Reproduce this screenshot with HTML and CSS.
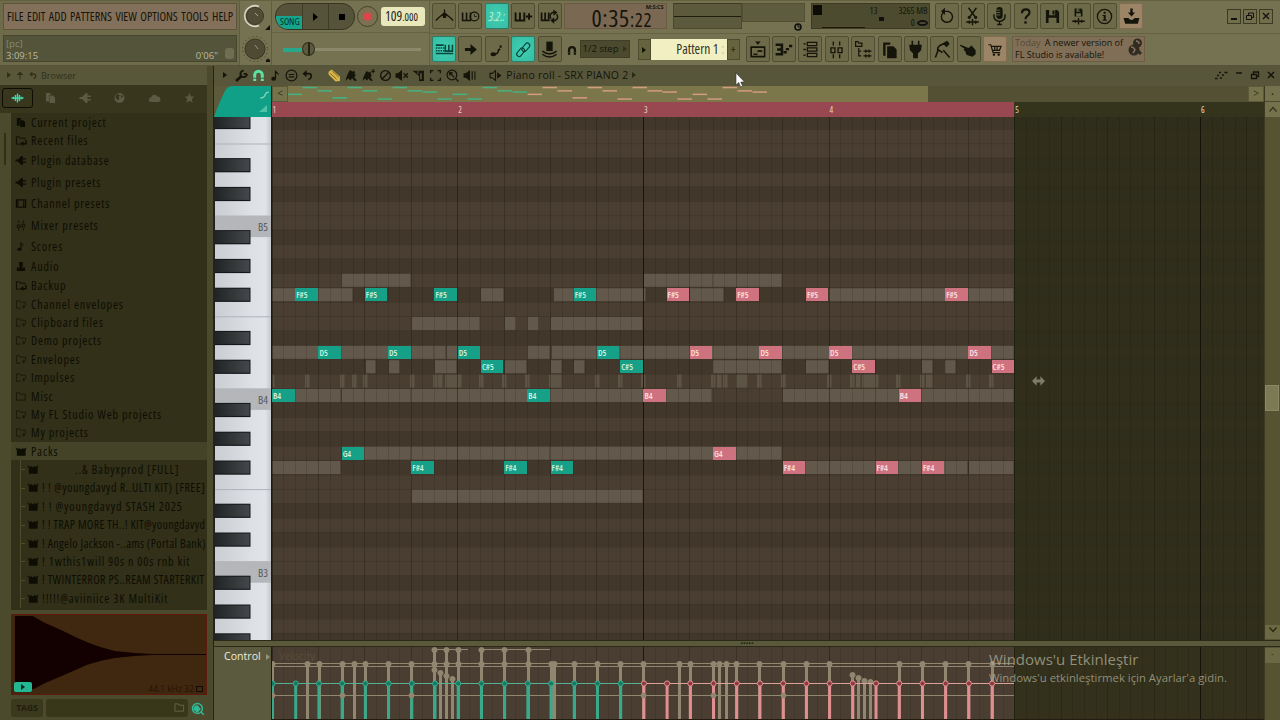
FILE: index.html
```
<!DOCTYPE html>
<html lang="en">
<head>
<meta charset="UTF-8">
<meta name="viewport" content="width=device-width, initial-scale=1.0">
<title>Piano roll - SRX PIANO 2</title>
<link rel="stylesheet" href="styles.css">
</head>
<body>
<!-- icon set -->
<svg class="icon-set">
  <symbol id="i-file" viewBox="0 0 24 24"><path d="M3 2h9v4H9v13H3zM10 7h7l4 4v11H10z" fill="currentColor"/></symbol>
  <symbol id="i-folder" viewBox="0 0 24 24"><path d="M2 20V4h7l2 3h10v13z" fill="none" stroke="currentColor" stroke-width="2"/></symbol>
  <symbol id="i-folder-arrow" viewBox="0 0 24 24"><path d="M11 20H2V4h7l2 3h10v3" fill="none" stroke="currentColor" stroke-width="2"/><path d="M23 11v8h-8" fill="none" stroke="currentColor" stroke-width="3"/><path d="M10 19l7-6v11z" fill="currentColor"/></symbol>
  <symbol id="i-folder-note" viewBox="0 0 24 24"><path d="M12 20H2V4h7l2 3h11v7" fill="none" stroke="currentColor" stroke-width="2"/><path d="M14 14h8l-4 8z" fill="currentColor"/></symbol>
  <symbol id="i-plug" viewBox="0 0 24 24"><path d="M0 10h5l8-8h3v5h7v3h-7v4h7v3h-7v5h-3l-8-8H0z" fill="currentColor"/></symbol>
  <symbol id="i-channel" viewBox="0 0 24 24"><path d="M2 4h20v16H2zM5 4v16M18 4v16" fill="none" stroke="currentColor" stroke-width="2.4"/></symbol>
  <symbol id="i-mixer" viewBox="0 0 24 24"><path d="M7 1v5M7 19v4M17 1v5M17 18v5M4 11h6v6H4zM14 9h6v6h-6z" fill="none" stroke="currentColor" stroke-width="1.8"/></symbol>
  <symbol id="i-note" viewBox="0 0 24 24"><path d="M12 3v14" stroke="currentColor" stroke-width="2.4"/><path d="M12 2c0 4 7 4 6 10-1-3-4-5-6-4z" fill="currentColor"/><ellipse cx="8.500" cy="18" rx="4.500" ry="3.500" fill="currentColor"/></symbol>
  <symbol id="i-audio" viewBox="0 0 24 24"><path d="M8 2h8v8l-2 4h7v8H3v-8h7l-2-4z" fill="currentColor"/></symbol>
  <symbol id="i-pack" viewBox="0 0 24 24"><path d="M0 3l7 4V3l4 4h2l4-4v4l7-4-2 7v11H3V10z" fill="currentColor"/></symbol>
  <symbol id="i-wave" viewBox="0 0 24 24"><path d="M0 12h24M4 9.500v5M8 6v12M12 3v18M16 6v12M20 9.500v5" stroke="currentColor" stroke-width="2.8"/></symbol>
  <symbol id="i-globe" viewBox="0 0 24 24"><circle cx="12" cy="12" r="10" fill="currentColor"/><path d="M6 4l7 2-3 4 2 2-3 5-5-7zM15 5l4 4-4 3z" fill="#35331c"/></symbol>
  <symbol id="i-cloud" viewBox="0 0 24 24"><path d="M5 20a4 4 0 0 1 0-9 7 7 0 0 1 13-2 5.500 5.500 0 0 1 1 11z" fill="currentColor"/></symbol>
  <symbol id="i-star" viewBox="0 0 24 24"><path d="M12 2l3 7h7l-5.500 5 2 8-6.500-4.500L5.500 22l2-8L2 9h7z" fill="currentColor"/></symbol>
  <symbol id="i-undo" viewBox="0 0 24 24"><path d="M6 8h8q7 0 6 7-1 4-6 6" fill="none" stroke="currentColor" stroke-width="4"/><path d="M1 8l9-8v16z" fill="currentColor"/></symbol>
  <symbol id="i-up" viewBox="0 0 24 24"><path d="M12 4v20M3 9h18" stroke="currentColor" stroke-width="3"/><path d="M12 0l8 9H4z" fill="currentColor"/></symbol>
  <symbol id="i-magnet" viewBox="0 0 24 24"><path d="M5 22V11a7 7 0 0 1 14 0v11" fill="none" stroke="currentColor" stroke-width="5.500"/><path d="M1 17h8M15 17h8" stroke="#4b4a32" stroke-width="1.500"/></symbol>
  <symbol id="i-wrench" viewBox="0 0 24 24"><path d="M2 22l10-9" stroke="currentColor" stroke-width="5"/><path d="M22 9a6 6 0 1 1-6-6M22 9h-6" fill="none" stroke="currentColor" stroke-width="3.500"/></symbol>
  <symbol id="i-brush" viewBox="0 0 24 24"><path d="M3 14L9 2l5 3 2-2 3 3-2 2 3 3-3 4 5 6-4 1-5-5-3 4-4-4-5 5z" fill="currentColor"/></symbol>
  <symbol id="i-speaker" viewBox="0 0 24 24"><path d="M1 8h4l8-6v20l-8-6H1z" fill="currentColor"/></symbol>
  <symbol id="i-save" viewBox="0 0 24 24"><path d="M2 2h17l3 3v17H2z" fill="currentColor"/><path d="M7 2h9v8H7zM6 14h12v8H6z" fill="#6a6948"/><path d="M12 3h3v6h-3z" fill="currentColor"/></symbol>
</svg>

<div class="app">
  <header class="toolbar">
    <div class="menu-col">
      <nav class="menu">
        <span>FILE</span><span>EDIT</span><span>ADD</span><span>PATTERNS</span><span>VIEW</span><span>OPTIONS</span><span>TOOLS</span><span>HELP</span>
      </nav>
      <div class="hint">
        <div class="hint-name">[pc]</div>
        <div class="hint-row"><span>3:09:15</span><span class="hint-len">0'06"</span><i class="hint-hand"></i></div>
      </div>
    </div>

    <div class="knob-col">
      <div class="knob-cell">
        <svg width="30" height="32" viewBox="0 0 30 32"><circle cx="15" cy="15" r="8.500" fill="#504d36" stroke="#3a3924"/><path d="M19 5.500A10.300 10.300 0 1 0 19 24.500" fill="none" stroke="#d9d8c8" stroke-width="1.500"/><path d="M15 12l3 3" stroke="#aaa88b"/><path d="M30 24v5h-5z" fill="#111"/></svg>
      </div>
      <div class="knob-cell">
        <svg width="30" height="32" viewBox="0 0 30 32"><circle cx="15" cy="15" r="12.500" fill="none" stroke="#3c3b26" stroke-dasharray="1 3"/><circle cx="15" cy="15" r="10" fill="#4e4b35" stroke="#383722"/><path d="M15 11l3 4" stroke="#98967a"/><path d="M26 28v-3l1 1 1-2 1 2 1-1v3z" fill="#111"/></svg>
      </div>
    </div>

    <div class="transport-col">
      <div class="transport">
        <div class="pill">
          <div class="song"><span>SONG</span></div>
          <div class="pill-btn"><svg width="8" height="10" viewBox="0 0 8 10"><path d="M1 1l5 4-5 4z"/></svg></div>
          <div class="pill-btn"><svg width="8" height="8"><path d="M1 1h6v6H1z"/></svg></div>
        </div>
        <div class="record"></div>
        <div class="tempo">109<small>.000</small></div>
      </div>
      <div class="slider"><i class="slider-fill"></i><i class="slider-thumb"></i></div>
    </div>

    <div class="tools-col">
      <div class="tool-row">
        <div class="btn-group">
          <div class="btn"><svg viewBox="0 0 24 24"><path d="M12 3v5M1 17q7-7 11-9 4 2 11 9" fill="none" stroke="currentColor" stroke-width="1.600"/><path d="M7 12l5-6 5 6-3-1v3h-4v-3z"/></svg></div>
          <div class="btn"><svg viewBox="0 0 24 24"><path d="M2 7v10h10V7M7 7v10" fill="none" stroke="currentColor" stroke-width="2"/><circle cx="17" cy="12" r="5.500" fill="none" stroke="currentColor" stroke-width="1.500"/><path d="M17 9v3h3" fill="none" stroke="currentColor"/></svg></div>
          <div class="btn on"><span class="count-label">3.2.:</span></div>
          <div class="btn"><svg viewBox="0 0 24 24"><path d="M2 7v10h11V7M7.500 7v10M15 12h8M19 8v8" fill="none" stroke="currentColor" stroke-width="2.400"/></svg></div>
          <div class="btn"><svg viewBox="0 0 24 24"><path d="M2 7v10h9V7M6.500 7v10" fill="none" stroke="currentColor" stroke-width="2.200"/><path d="M14 15a5 5 0 0 1 2-8h2M21 9a5 5 0 0 1-2 8h-2" fill="none" stroke="currentColor" stroke-width="1.800"/><path d="M17 3l5 4-5 4zM18 13l-5 4 5 4z"/></svg></div>
        </div>
        <div class="clock"><div class="clock-unit">M:S:CS</div><div class="clock-main">0:35<small>:22</small></div></div>
        <div class="scope"></div>
        <div class="scope-side"><div class="peak"></div><svg width="10" height="9" viewBox="0 0 10 9"><circle cx="5" cy="4" r="3" fill="none" stroke="#111" stroke-width="1.600"/><path d="M5 1v3h3" stroke="#111" fill="none"/></svg></div>
        <div class="cpu"><i class="cpu-mark"></i><div class="cpu-graph"></div><div class="cpu-nums"><span>13</span><i></i></div><div class="cpu-mem"><span>3265 MB</span><span>0 <i class="disk"></i></span></div></div>
        <div class="btn-group right-group">
          <div class="btn"><svg viewBox="0 0 24 24"><path d="M8 7A7 7 0 1 0 14 5.500H8" fill="none" stroke="currentColor" stroke-width="1.800"/><path d="M10 1v9L5 5.500z"/></svg></div>
          <div class="btn"><svg viewBox="0 0 24 24"><path d="M7 1l8 11M17 1L9 12M4 19h16M8 17v4M12 15v8M16 17v4" stroke="currentColor" stroke-width="1.800"/><circle cx="8" cy="13" r="2"/><circle cx="16" cy="13" r="2"/></svg></div>
          <div class="btn"><svg viewBox="0 0 24 24"><rect x="8" y="0" width="8" height="15" rx="4"/><path d="M5 9v3a7 6 0 0 0 14 0V9M12 18v4M9 22h6" fill="none" stroke="currentColor" stroke-width="1.800"/><path d="M8 4h5M8 7h5M8 10h5" stroke="#77754f"/></svg></div>
          <div class="btn"><svg viewBox="0 0 24 24"><path d="M7.500 8q0-5 5-5 5 0 4.500 4.500-.5 2.500-3 4-2 1.500-2 4" fill="none" stroke="currentColor" stroke-width="2.700"/><path d="M10.500 18h3v3h-3z"/></svg></div>
          <div class="btn"><svg viewBox="0 0 24 24"><use href="#i-save" x="2" y="2" width="20" height="20"/></svg></div>
          <div class="btn"><svg viewBox="0 0 24 24"><use href="#i-save" x="6" y="1" width="12" height="12"/><path d="M4 18h16M8 16v4M12 14v8M16 16v4" stroke="currentColor" stroke-width="1.800"/></svg></div>
          <div class="btn"><svg viewBox="0 0 24 24"><circle cx="12" cy="12" r="9" fill="none" stroke="currentColor" stroke-width="1.600"/><path d="M11 6h2.500v2.500H11zM9.500 10h4v6H15v1.500H9.500V16H11v-4.500H9.500z"/></svg></div>
          <div class="btn alert"><svg viewBox="0 0 24 24"><path d="M10.500 2h3v5h3l-4.500 5-4.500-5h3zM2 14h6q4 5 8 0h6l-2 7H4z"/></svg></div>
        </div>
        <div class="win-btns">
          <i><svg width="12" height="12"><path d="M3 9h6" stroke="#111" stroke-width="2"/></svg></i>
          <i><svg width="12" height="12"><path d="M2.500 5.500h5v4h-5zM4.500 5V3h5v4.500H8" fill="none" stroke="#111"/></svg></i>
          <i><svg width="12" height="12"><path d="M3 3l6 6M9 3l-6 6" stroke="#111" stroke-width="1.300"/></svg></i>
        </div>
      </div>

      <div class="tool-row second">
        <div class="btn-group">
          <div class="btn on"><svg viewBox="0 0 24 24"><path d="M1 6.500h10M1 17h22M13 6v8h9V6M17.500 6v9" fill="none" stroke="currentColor" stroke-width="2"/><path d="M1 10h11M1 13.500h11" stroke="currentColor" stroke-width="2" stroke-dasharray="2 1"/></svg></div>
          <div class="btn"><svg viewBox="0 0 24 24"><path d="M5 10h7V5l8 7-8 7v-5H5z"/></svg></div>
          <div class="btn"><svg viewBox="0 0 24 24"><ellipse cx="8" cy="18" rx="3.500" ry="2.500"/><path d="M10 18q5-1 4-5" fill="none" stroke="currentColor" stroke-width="2"/><path d="M14 13q4-2 3-7" fill="none" stroke="currentColor" stroke-width="2.500" stroke-dasharray="3 1.500"/></svg></div>
          <div class="btn on"><svg viewBox="0 0 24 24"><g transform="rotate(-50 12 12)" fill="none" stroke="currentColor" stroke-width="1.500"><rect x="1" y="8.500" width="12" height="6" rx="3"/><rect x="10" y="9.500" width="12" height="6" rx="3"/></g></svg></div>
          <div class="btn"><svg viewBox="0 0 24 24"><path d="M8 2h8v12H8z"/><path d="M3 14q9 7 18 0M3 18q9 7 18 0" fill="none" stroke="currentColor" stroke-width="2"/></svg></div>
        </div>
        <svg class="snap-magnet"><use href="#i-magnet"/></svg>
        <div class="snap">1/2 step<b></b></div>
        <div class="pat-arrow"><b></b></div>
        <div class="pattern">Pattern 1<em>:</em></div>
        <div class="pat-add">+</div>
        <div class="btn-group pat-group">
          <div class="btn"><svg viewBox="0 0 24 24"><path d="M4 9h17v12H4z" fill="none" stroke="currentColor" stroke-width="2"/><path d="M9 2h7l-3.500 4zM7 17h5v2H7zM12 13h6v2h-6z"/></svg></div>
          <div class="btn"><svg viewBox="0 0 24 24"><path d="M2 6h8v12H2M4 12h6" fill="none" stroke="currentColor" stroke-width="3.200"/><path d="M12 14h4v3h-4zM15 10h4v3h-4zM19 6h4v3h-4z"/></svg></div>
          <div class="btn"><svg viewBox="0 0 24 24"><path d="M8 3h12v4H8zM8 10h12v4H8zM8 17h12v4H8zM3 5h3M3 12h3M3 19h3" fill="none" stroke="currentColor" stroke-width="1.600"/></svg></div>
          <div class="btn"><svg viewBox="0 0 24 24"><path d="M8 2v5M8 18v5M16 2v5M16 18v5M5 10h5v6H5zM14 10h5v6h-5z" fill="none" stroke="currentColor" stroke-width="1.700"/></svg></div>
          <div class="btn"><svg viewBox="0 0 24 24"><path d="M2 8V2h3l1 2h4v4zM6 10v10h3M6 14h3M12 14h10M12 20h10M15 12v4M19 12v4M15 18v4M19 18v4" fill="none" stroke="currentColor" stroke-width="1.500"/></svg></div>
          <div class="btn"><svg viewBox="0 0 24 24"><path d="M4 3h9v3H7v14H4zM9 8h8l4 4v11H9z"/></svg></div>
          <div class="btn"><svg viewBox="0 0 24 24"><path d="M7 1h2v5h6V1h2v5h3l-1 7-4 4v6h-6v-6l-4-4-1-7h3z"/></svg></div>
          <div class="btn"><svg viewBox="0 0 24 24"><path d="M15 5Q9 5 6 10v4l-3 8M6 12l6 4M13 13l8 9" fill="none" stroke="currentColor" stroke-width="2"/><path d="M12 4l6-3 3 4-4 4z"/></svg></div>
          <div class="btn"><svg viewBox="0 0 24 24"><path d="M2 6l10 4 4-3 5 6v5l-4 3-7-2-2-3 1-1-3-2 1-2-6-4z"/></svg></div>
          <div class="btn alert"><svg viewBox="0 0 24 24"><path d="M3 6h3l3 10h9M7 8h12l-2 5H8M11 8v5M14 8v5" fill="none" stroke="currentColor" stroke-width="1.500"/><circle cx="10" cy="18.500" r="1.500"/><circle cx="16" cy="18.500" r="1.500"/></svg></div>
        </div>
        <div class="news"><p><span>Today</span> A newer version of<br>FL Studio is available!</p><svg width="15" height="20" viewBox="0 0 15 20"><circle cx="9.500" cy="5" r="4.500" fill="#302d20"/><circle cx="6" cy="12" r="5.500" fill="#302d20"/><path d="M3 9q3 0 4 3l-2 3M8 3q3 0 3 3" stroke="#857060" stroke-width="1.500" fill="none"/><path d="M10 13l3 3" stroke="#302d20" stroke-width="3"/></svg></div>
      </div>
    </div>
  </header>

  <main class="workspace">
    <aside class="browser">
      <div class="browser-head"><b></b><svg><use href="#i-up"/></svg><svg><use href="#i-undo"/></svg><span>Browser</span></div>
      <div class="browser-tabs">
        <span class="tab active"><svg><use href="#i-wave"/></svg></span>
        <span class="tab"><svg><use href="#i-file"/></svg></span>
        <span class="tab"><svg><use href="#i-plug"/></svg></span>
        <span class="tab"><svg><use href="#i-globe"/></svg></span>
        <span class="tab"><svg><use href="#i-cloud"/></svg></span>
        <span class="tab"><svg><use href="#i-star"/></svg></span>
      </div>
      <div class="browser-body">
        <div class="browser-scroll"><i></i></div>
        <ul class="tree">
          <li><svg><use href="#i-file"/></svg>Current project</li>
          <li><svg><use href="#i-folder-arrow"/></svg>Recent files</li>
          <li class="tall"><svg><use href="#i-plug"/></svg>Plugin database</li>
          <li class="tall"><svg><use href="#i-plug"/></svg>Plugin presets</li>
          <li class="tall"><svg><use href="#i-channel"/></svg>Channel presets</li>
          <li class="tall"><svg><use href="#i-mixer"/></svg>Mixer presets</li>
          <li class="tall"><svg><use href="#i-note"/></svg>Scores</li>
          <li class="mid"><svg><use href="#i-audio"/></svg>Audio</li>
          <li><svg><use href="#i-folder-arrow"/></svg>Backup</li>
          <li><svg class="dim"><use href="#i-folder-note"/></svg>Channel envelopes</li>
          <li><svg class="dim"><use href="#i-folder-note"/></svg>Clipboard files</li>
          <li><svg class="dim"><use href="#i-folder-note"/></svg>Demo projects</li>
          <li><svg class="dim"><use href="#i-folder-note"/></svg>Envelopes</li>
          <li><svg class="dim"><use href="#i-folder-note"/></svg>Impulses</li>
          <li><svg class="dim"><use href="#i-folder"/></svg>Misc</li>
          <li><svg class="dim"><use href="#i-folder-note"/></svg>My FL Studio Web projects</li>
          <li><svg class="dim"><use href="#i-folder-note"/></svg>My projects</li>
          <li class="open"><svg><use href="#i-pack"/></svg>Packs</li>
          <li class="sub"><svg><use href="#i-pack"/></svg><span class="pushed">..&amp; Babyxprod [FULL]</span></li>
          <li class="sub"><svg><use href="#i-pack"/></svg><span class="snug">! ! @youngdavyd R..ULTI KIT) [FREE]</span></li>
          <li class="sub"><svg><use href="#i-pack"/></svg><span>! ! @youngdavyd STASH 2025</span></li>
          <li class="sub"><svg><use href="#i-pack"/></svg><span class="tight">! ! TRAP MORE TH..! KIT@youngdavyd</span></li>
          <li class="sub"><svg><use href="#i-pack"/></svg><span class="tight">! Angelo Jackson -..ams (Portal Bank)</span></li>
          <li class="sub"><svg><use href="#i-pack"/></svg><span>! 1wthis1will 90s n 00s rnb kit</span></li>
          <li class="sub"><svg><use href="#i-pack"/></svg><span class="tight">! TWINTERROR PS..REAM STARTERKIT</span></li>
          <li class="sub"><svg><use href="#i-pack"/></svg><span>!!!!!@aviiniice 3K MultiKit</span></li>
        </ul>
      </div>
      <div class="preview">
        <svg class="preview-wave" viewBox="0 0 196 81" preserveAspectRatio="none"><path d="M3 1h18l12 7 16 7 14 7 13 6 14 5 14 4 20 2 18 1h54v1h-54l-18 1-20 2-14 3-14 4-13 6-14 6-16 7-11 6H3z" fill="#130000"/></svg>
        <span class="preview-play"><b></b></span>
        <span class="preview-info">44.1 kHz 32 <i></i></span>
      </div>
      <div class="tags"><span class="tags-btn">TAGS</span><span class="tags-input"><svg><use href="#i-folder"/></svg></span><svg class="tags-find" viewBox="0 0 24 24"><circle cx="11" cy="11" r="8.500" fill="none" stroke="currentColor" stroke-width="2.500"/><path d="M5 12q2-6 6-5l4 5-4 5zM17 17l5 5" stroke="currentColor" stroke-width="2.500" fill="currentColor"/></svg></div>
    </aside>

    <section class="roll">
      <div class="roll-head">
        <b class="tri"></b>
        <svg><use href="#i-wrench"/></svg>
        <svg class="mint"><use href="#i-magnet"/></svg>
        <svg><use href="#i-note"/></svg>
        <svg viewBox="0 0 24 24"><circle cx="12" cy="12" r="10" fill="none" stroke="currentColor" stroke-width="2.200"/><path d="M7 10h10M7 14.500h10" stroke="currentColor" stroke-width="2"/></svg>
        <svg class="small"><use href="#i-undo"/></svg>
        <svg class="pencil" viewBox="0 0 24 24"><path d="M1 5l6-4 15 13v8l-8 1L1 10z" fill="#d8b545"/><path d="M4 8l12 11M8 4l12 11" stroke="#6b5a22" stroke-width="1.500"/></svg>
        <svg><use href="#i-brush"/></svg>
        <svg viewBox="0 0 24 24"><use href="#i-brush" y="2" width="22" height="22"/><path d="M17 4h7M20.500 0v8" stroke="currentColor" stroke-width="2"/></svg>
        <svg viewBox="0 0 24 24"><circle cx="12" cy="12" r="9" fill="none" stroke="currentColor" stroke-width="2.500"/><path d="M18 6L6 18" stroke="currentColor" stroke-width="2.500"/></svg>
        <svg viewBox="0 0 24 24"><use href="#i-speaker"/><path d="M16 8l8 8M24 8l-8 8" stroke="currentColor" stroke-width="2.500"/></svg>
        <svg viewBox="0 0 24 24"><path d="M1 3h21v19h-9V13z" fill="currentColor"/><path d="M15 8h3v11h-3zM10 3h2v6h-2z" fill="#5a5739"/></svg>
        <svg viewBox="0 0 24 24"><path d="M3 8V3h5M16 3h5v5M21 16v5h-5M8 21H3v-5" fill="none" stroke="currentColor" stroke-width="2.500"/></svg>
        <svg viewBox="0 0 24 24"><circle cx="11" cy="11" r="9" fill="none" stroke="currentColor" stroke-width="2.200"/><path d="M7 7l8 8M7 12V7h5M18 18l5 5" stroke="currentColor" stroke-width="2.500" fill="none"/></svg>
        <svg viewBox="0 0 24 24"><use href="#i-speaker"/><path d="M17 4v16M22 4v16" stroke="currentColor" stroke-width="2"/></svg>
        <svg class="title-icon" viewBox="0 0 24 24"><path d="M2 8h4l6-5v18l-6-5H2z" fill="none" stroke="currentColor" stroke-width="2"/><path d="M15 6l8 6-8 6z" fill="currentColor"/></svg>
        <span class="roll-title">Piano roll - SRX PIANO 2</span><b class="tri dimmed"></b>
        <div class="roll-win">
          <svg width="14" height="10" viewBox="0 0 14 10"><path d="M1 8.500h2.500M3 5.500h2M5 2.500h2M6 8h2M8 5h2M10.500 2.500h3" stroke="#14140a" stroke-width="1.500"/></svg>
          <svg width="10" height="10"><path d="M2 3h6" stroke="#14140a" stroke-width="1.500"/></svg>
          <svg width="10" height="10"><path d="M1.500 4.500h5v4h-5zM3.500 4V2h5v4.500H7" fill="none" stroke="#14140a" stroke-width="1.300"/></svg>
          <svg width="10" height="10"><path d="M2 2l6 6M8 2L2 8" stroke="#14140a" stroke-width="1.500"/></svg>
        </div>
      </div>

      <div class="roll-top">
        <svg class="corner" viewBox="0 0 57 31"><path d="M0 31Q3 22 9 9 12 1 17 0h40v31z" fill="#10a088"/><path d="M46 12q4 0 5-3 1-3 4-3" fill="none" stroke="#8fd8bd" stroke-width="1.200"/><path d="M53 19v7h-8z" fill="#4fc3a5"/></svg>
        <div class="rulers">
          <div class="minimap">
            <span class="mini-btn left">&lt;</span>
            <svg class="mini-notes" id="mini-notes" width="640" height="16"></svg>
            <span class="mini-btn right">&gt;</span>
          </div>
          <div class="ruler" id="ruler"></div>
        </div>
        <div class="side-top"><span>•</span><span><svg width="10" height="8"><path d="M1.500 6.500l3.500-4 3.500 4" fill="none" stroke="#33321c" stroke-width="1.200"/></svg></span></div>
      </div>

      <div class="roll-main">
        <svg class="keys" id="keys" width="57" height="523"></svg>
        <div class="grid" id="grid">
          <svg class="grid-svg" id="grid-svg" width="992" height="523"></svg>
          <svg class="resize-cursor" viewBox="0 0 14 10"><path d="M5 0L0 5l5 5V6.500h4V10l5-5-5-5v3.500H5z"/></svg>
        </div>
        <div class="side-scroll"><i class="thumb"></i><span><svg width="10" height="8"><path d="M1.500 1.500l3.500 4 3.500-4" fill="none" stroke="#26250f" stroke-width="1.300"/></svg></span></div>
      </div>

      <div class="splitter">•••••</div>

      <div class="control">
        <div class="control-label">Control<b></b></div>
        <div class="velocity"><span class="velocity-name">Velocity</span><svg id="velocity" width="992" height="73"></svg></div>
        <div class="side-scroll"><span class="minus">-</span></div>
      </div>
    </section>
  </main>

  <!-- overlays -->
  <div class="activate"><div class="activate-title">Windows'u Etkinleştir</div><div class="activate-text">Windows'u etkinleştirmek için Ayarlar'a gidin.</div></div>
  <svg class="pointer" viewBox="0 0 10 16"><path d="M1 1v12l2.800-2.600L5.600 15l2-.9L5.800 10H9.600z" fill="#fff" stroke="#333" stroke-width=".6"/></svg>
</div>
<script src="script.js"></script>
</body>
</html>
```
FILE: styles.css
```
* {
    box-sizing: border-box;
}
body {
    margin: 0;
    overflow: hidden;
    background: #4b4a2c;
    font-family: "Open Sans", "Noto Sans", sans-serif;
    color: #15150a;
}
i, em {
    font-style: normal;
}
.icon-set {
    display: none;
}
.app {
    position: relative;
    width: 1280px;
    height: 720px;
    display: flex;
    flex-direction: column;
    overflow: hidden;
}

/* toolbar */
.toolbar {
    display: flex;
    height: 66px;
    background: #757251;
    border-bottom: 1px solid #55533a;
    border-top: 1px solid #636140;
}
.menu-col {
    width: 240px;
    padding: 2px 2px 0 3px;
    border-right: 1px solid #5f5d3f;
    background: #6d6b4a;
}
.menu {
    display: flex;
    align-items: center;
    justify-content: space-between;
    height: 27px;
    padding: 0 3px 1px 3px;
    background: #83705b;
    border: 1px solid #5f533c;
    font-size: 12.1px;
    font-stretch: 75%;
    white-space: nowrap;
}
.hint {
    height: 27px;
    margin-top: 5px;
    padding: 2px 2px;
    background: #54543a;
    border: 1px solid #46462e;
    font-size: 9.5px;
    line-height: 12px;
    color: #b9b99f;
}
.hint-name {
    color: #8a8a6e;
}
.hint-row {
    display: flex;
}
.hint-len {
    margin-left: auto;
}
.hint-hand {
    width: 9px;
    height: 11px;
    margin: -2px 0 0 7px;
    border-radius: 3px;
    background: #6f6e52;
}
.knob-col {
    width: 32px;
    border-right: 1px solid #5f5d3f;
}
.knob-cell {
    height: 33px;
}
.transport-col {
    width: 158px;
    border-right: 1px solid #64623f;
}
.transport {
    display: flex;
    height: 32px;
    padding: 2px 0 0 3px;
    border-bottom: 1px solid #64623f;
}
.pill {
    display: flex;
    width: 80px;
    height: 27px;
    overflow: hidden;
    border: 1px solid #36361f;
    border-radius: 13px;
    background: #55533a;
}
.song {
    display: flex;
    align-items: flex-end;
    width: 26px;
}
.song span {
    width: 26px;
    height: 13px;
    padding-left: 4px;
    background: #15a58e;
    font-size: 9.5px;
    line-height: 12px;
    font-stretch: 80%;
    color: #052a22;
}
.pill-btn {
    display: flex;
    align-items: center;
    justify-content: center;
    width: 26px;
    border-left: 1px solid #3d3c26;
}
.record {
    width: 21px;
    height: 21px;
    margin: 3px 0 0 2px;
    border: 1.5px solid #434429;
    border-radius: 50%;
    background: radial-gradient(circle, #dc4549 0 3.5px, #7c7052 5px);
}
.tempo {
    width: 44px;
    height: 19px;
    margin: 4px 0 0 3px;
    padding-left: 4px;
    border-radius: 3px;
    background: #e9e8bd;
    font-size: 13.5px;
    line-height: 19px;
    font-stretch: 75%;
    color: #24231a;
}
.tempo small {
    font-size: 10.5px;
}
.slider {
    position: relative;
    width: 138px;
    height: 3px;
    margin: 15px 0 0 11px;
    background: #8b896b;
}
.slider-fill {
    display: block;
    width: 18px;
    height: 4px;
    background: #27a78c;
}
.slider-thumb {
    position: absolute;
    left: 19px;
    top: -6px;
    width: 13px;
    height: 14px;
    border: 1px solid #2c2c18;
    border-radius: 50%;
    background: linear-gradient(90deg, #5b5a40 45%, #24240f 45% 60%, #5b5a40 60%);
}
.tools-col {
    flex: 1;
}
.tool-row {
    display: flex;
    height: 33px;
    padding: 2px 0 0 2px;
    border-bottom: 1px solid #64623f;
}
.btn-group {
    display: flex;
    gap: 2.4px;
}
.btn {
    display: flex;
    align-items: center;
    justify-content: center;
    width: 24px;
    height: 26px;
    background: #6c6a49;
    border: 1.5px solid #4f4e32;
    border-radius: 2px;
    color: #14140a;
}
.btn svg {
    width: 19px;
    height: 19px;
    fill: currentColor;
}
.btn.on {
    background: radial-gradient(#42d0b6, #35bda2);
    border-color: #2d7d66;
    color: #08483c;
}
.btn.alert {
    background: #9c8467;
    border-color: #826c52;
}
.count-label {
    font-size: 12px;
    font-style: italic;
    font-stretch: 75%;
    color: #c5efd0;
}
.clock {
    width: 103px;
    height: 26px;
    margin-left: 2px;
    background: #7a6853;
    border: 1px solid #6a5944;
}
.clock-unit {
    height: 6px;
    padding-right: 2px;
    font-size: 5.5px;
    font-weight: bold;
    line-height: 6px;
    text-align: right;
}
.clock-main {
    height: 18px;
    margin-top: -1px;
    padding-left: 27px;
    font-size: 24px;
    line-height: 17px;
    letter-spacing: .6px;
    font-stretch: 75%;
}
.clock-main small {
    font-size: 19px;
}
.scope {
    width: 69px;
    height: 26px;
    margin-left: 6px;
    background: linear-gradient(#1d1d10, #1d1d10) 0 12px / 100% 1px no-repeat #5b5a3c;
    border: 1px solid #4a492e;
    border-top-color: #3b3a22;
}
.scope-side {
    width: 63px;
    padding-right: 2px;
    text-align: right;
    line-height: 8px;
}
.peak {
    height: 19px;
    margin-right: -2px;
    background: #5d5c3e;
    border: 1px solid #514f34;
}
.cpu {
    display: flex;
    width: 119px;
    height: 26px;
    margin-left: 6px;
    padding: 1px;
    background: #4c4b2f;
    border: 1px solid #3c3b22;
    font-size: 9.5px;
    line-height: 12px;
    font-stretch: 75%;
}
.cpu-mark {
    width: 9px;
    height: 10px;
    background: #0d0d05;
}
.cpu-graph {
    width: 43px;
    height: 19px;
    margin-top: 4px;
    border-bottom: 1px solid #1a1a0c;
}
.cpu-nums {
    width: 18px;
    text-align: center;
}
.cpu-nums i {
    display: block;
    width: 5px;
    height: 4px;
    margin-left: 14px;
    background: #111;
}
.cpu-mem {
    display: flex;
    flex: 1;
    flex-direction: column;
    align-items: flex-end;
    white-space: nowrap;
}
.disk {
    display: inline-block;
    width: 11px;
    height: 6px;
    border: 2px solid #111;
    border-radius: 50%;
}
.right-group {
    margin-left: 5px;
}
.win-btns {
    display: flex;
    gap: 2px;
    margin: 6px 0 0 84px;
}
.win-btns i {
    width: 14px;
    height: 15px;
    border: 1px solid #3b3a24;
    line-height: 0;
    background: #706e4b;
}
.second {
    border-bottom: 0;
}
.snap-magnet {
    width: 10px;
    height: 11px;
    margin: 9px 2px 0 5px;
}
.snap {
    width: 50px;
    height: 18px;
    margin: 4px 0 0 1px;
    padding-left: 2px;
    background: #4b4a2e;
    border: 1px solid #3f3e26;
    font-size: 9.5px;
    line-height: 16px;
    white-space: nowrap;
}
.snap b, .pat-arrow b, .browser-head b, .tri, .control-label b, .preview-play b {
    display: inline-block;
    border: 3px solid transparent;
    border-left: 4px solid currentColor;
    border-right: 0;
}
.snap b {
    margin-left: 5px;
    color: #33321c;
}
.pat-arrow, .pat-add {
    width: 13px;
    height: 21px;
    margin-top: 3px;
    border: 1px solid #4c4b2e;
    background: #66643f;
    font-size: 10px;
    line-height: 18px;
    text-align: center;
}
.pat-arrow {
    margin-left: 8px;
}
.pattern {
    width: 76px;
    height: 21px;
    margin-top: 3px;
    padding-right: 2px;
    background: #f2f0c3;
    font-size: 13.5px;
    line-height: 20px;
    font-stretch: 75%;
    text-align: right;
    color: #33321e;
}
.pattern em {
    margin-left: 3px;
    color: #c5c39a;
}
.pat-group {
    margin-left: 6px;
}
.news {
    display: flex;
    justify-content: space-between;
    width: 133px;
    height: 26px;
    margin-left: 5px;
    padding: 0 1px 0 2px;
    background: #806e57;
    border: 1px solid #6d5c46;
    font-size: 9px;
    line-height: 12px;
    white-space: nowrap;
}
.news p {
    margin: 0;
}
.news span {
    margin-right: 2px;
    color: #544a36;
}
.news svg {
    margin-top: 1px;
    flex: none;
}

/* browser */
.workspace {
    display: flex;
    flex: 1;
    min-height: 0;
}
.browser {
    display: flex;
    flex-direction: column;
    width: 214px;
    padding-right: 6px;
    background: #4b4a2c;
    border-right: 1px solid #26250f;
}
.browser-head {
    display: flex;
    align-items: center;
    gap: 5px;
    height: 19px;
    padding: 0 0 1px 7px;
    background: #59573a;
    font-size: 9px;
    color: #302f1a;
}
.browser-head svg {
    width: 8px;
    height: 9px;
}
.browser-head span {
    margin-left: -1px;
}
.browser-tabs {
    display: flex;
    align-items: center;
    height: 28px;
    padding: 0 0 2px 2px;
    background: #38361d;
    color: #5b5a43;
}
.tab {
    display: flex;
    align-items: center;
    justify-content: center;
    width: 34.9px;
    height: 20px;
}
.tab svg {
    width: 13px;
    height: 12px;
}
.tab.active {
    width: 31px;
    border: 1px solid #0d0d05;
    border-radius: 3px;
    color: #3fd8a8;
}
.browser-body {
    display: flex;
    height: 497px;
}
.browser-scroll {
    width: 11px;
    padding: 20px 0 0 4px;
}
.browser-scroll i {
    display: block;
    width: 2px;
    height: 32px;
    background: #302f18;
}
.tree {
    flex: 1;
    margin: 0;
    padding: 0;
    overflow: hidden;
    list-style: none;
    background: #323018;
    font-size: 12px;
    font-stretch: 75%;
    letter-spacing: .86px;
    color: #0d0d04;
    white-space: nowrap;
}
.tree li {
    display: flex;
    align-items: center;
    height: 18.4px;
    padding: .4px 0 0 4px;
}
.tree li.tall {
    height: 21.5px;
}
.tree li.mid {
    height: 19px;
}
.tree svg {
    width: 12px;
    height: 11px;
    margin-right: 4px;
    flex: none;
}
.tree .dim {
    color: #191808;
}
.tree li.open {
    background: #444327;
}
.tree li.sub {
    padding-left: 15px;
}
.tree li.sub svg {
    margin-right: 3px;
}
.tree li.sub::before {
    content: "";
    width: 4px;
    height: 18.4px;
    margin-left: -6px;
    margin-right: 2px;
    border-left: 1px solid #4c4b2e;
    background: linear-gradient(#4c4b2e, #4c4b2e) 0 9px / 4px 1px no-repeat;
}
.pushed {
    margin-left: 33px;
}
.tree .tight {
    letter-spacing: .35px;
}
.tree .snug {
    letter-spacing: .5px;
}
.preview {
    position: relative;
    width: 196px;
    height: 81px;
    margin: 4px 0 0 11px;
    background: #40270f;
    border: 1px solid #5e1a0c;
}
.preview-wave {
    display: block;
    width: 194px;
    height: 79px;
}
.preview-play {
    position: absolute;
    left: 2px;
    bottom: 2px;
    display: flex;
    align-items: center;
    justify-content: center;
    width: 18px;
    height: 10px;
    border-radius: 2px;
    background: #23b793;
    color: #06281e;
}
.preview-info {
    position: absolute;
    right: 3px;
    bottom: -1px;
    font-size: 8.5px;
    line-height: 12px;
    color: #241305;
}
.preview-info i {
    display: inline-block;
    width: 7px;
    height: 6px;
    border: 1px solid #140a02;
}
.tags {
    display: flex;
    gap: 3px;
    height: 18px;
    margin: 4px 0 0 11px;
}
.tags-btn {
    width: 32px;
    background: #3a391e;
    border-radius: 3px;
    font-size: 8.5px;
    font-weight: bold;
    line-height: 18px;
    text-align: center;
    color: #1f1e0c;
}
.tags-input {
    width: 142px;
    padding: 3px 3px 0 0;
    background: #383719;
    border-radius: 3px;
    text-align: right;
    line-height: 0;
    color: #68664a;
}
.tags-input svg {
    width: 11px;
    height: 11px;
}
.tags-find {
    width: 14px;
    height: 14px;
    margin-top: 3px;
    color: #2fb997;
}

/* piano roll */
.roll {
    width: 1066px;
    display: flex;
    flex-direction: column;
    background: #5c5a3b;
}
.roll-head {
    display: flex;
    align-items: center;
    height: 20px;
    padding: 0 0 2px 9px;
    background: #57553a;
}
.roll-head > svg {
    width: 13px;
    height: 13px;
    margin-right: 3.8px;
}
.roll-head .tri {
    margin-right: 8px;
}
.roll-head .mint {
    color: #5be3a4;
}
.roll-head .small {
    width: 11px;
    margin-right: 15px;
}
.roll-head .title-icon {
    margin: 0 4px 0 10px;
}
.roll-head .dimmed {
    margin-left: 4px;
    color: #2c2b17;
}
.roll-title {
    font-size: 10.5px;
    letter-spacing: .22px;
}
.roll-win {
    display: flex;
    align-items: center;
    gap: 6px;
    margin-left: auto;
    padding-right: 4px;
}
.roll-top {
    display: flex;
    height: 31px;
}
.corner {
    width: 57px;
    height: 31px;
}
.rulers {
    width: 993px;
    border-left: 1px solid #1d1c0e;
}
.minimap {
    display: flex;
    height: 16px;
    background: #535033;
}
.mini-notes {
    background: #7b774a;
}
.mini-btn {
    width: 16px;
    height: 16px;
    border: 1px solid #5b593a;
    font-size: 10px;
    line-height: 12px;
    text-align: center;
    color: #33321c;
    background: #76734b;
}
.mini-btn.right {
    margin-left: auto;
}
.ruler {
    position: relative;
    height: 15px;
    background: linear-gradient(90deg, #994750 742px, #34331b 742px);
    font-size: 8.5px;
    font-stretch: 80%;
    line-height: 15px;
    color: #e4dbc0;
}
.ruler span {
    position: absolute;
    top: 0;
}
.side-top {
    width: 16px;
    background: #74724c;
    font-size: 8px;
    line-height: 15px;
    text-align: center;
    border-left: 1px solid #3b3a22;
}
.side-top span {
    display: block;
    height: 16px;
    color: #33321c;
    border-bottom: 1px solid #4a4930;
}
.roll-main {
    display: flex;
    height: 523px;
}
.keys {
    background: linear-gradient(90deg, #c9ccd0, #dde0e5 65%, #e0e3e8 90%, #c6c9ce);
}
.keys text {
    font-stretch: 80%;
}
.grid {
    position: relative;
    width: 993px;
    border-left: 1px solid #1d1c0e;
}
.grid-svg {
    display: block;
}
.note {
    position: absolute;
    width: 22.5px;
    height: 13px;
    padding-left: 1px;
    background: #16a088;
    font-size: 8.5px;
    font-weight: 600;
    font-stretch: 78%;
    line-height: 13px;
    color: #d6f2dc;
}
.note.pink {
    background: #cf7280;
    color: #fae3df;
}
.resize-cursor {
    position: absolute;
    left: 760px;
    top: 259px;
    width: 13px;
    height: 10px;
    fill: #7f7d66;
}
.side-scroll {
    position: relative;
    width: 16px;
    background: #555332;
    border-left: 1px solid #3b3a22;
    text-align: center;
    font-size: 9px;
    color: #33321c;
}
.side-scroll .thumb {
    display: block;
    width: 14px;
    height: 26px;
    margin-top: 268px;
    background: #7c7a55;
    border: 1px solid #8b8965;
}
.side-scroll span {
    display: block;
    height: 14px;
    margin-top: 214px;
    background: #6b6943;
    line-height: 12px;
}
.side-scroll .minus {
    margin: 1px 0 0;
    height: 15px;
}
.splitter {
    height: 7px;
    background: #5b593c;
    border-top: 1px solid #2b2a17;
    border-bottom: 1px solid #2b2a17;
    font-size: 7px;
    line-height: 5px;
    text-align: center;
    color: #1c1b0d;
}
.control {
    display: flex;
    height: 73px;
}
.control-label {
    width: 57px;
    padding: 2px 0 0 10px;
    background: #5c5a3e;
    font-size: 10.6px;
    color: #eceadb;
    white-space: nowrap;
}
.control-label b {
    margin-left: 5px;
    color: #96947a;
}
.velocity {
    position: relative;
    width: 993px;
    border-left: 1px solid #1d1c0e;
}
.velocity-name {
    position: absolute;
    left: 7px;
    top: 2px;
    font-size: 10px;
    color: #5a4f3d;
}
.velocity svg {
    display: block;
}

/* overlays */
.activate {
    position: absolute;
    left: 989px;
    top: 649px;
    color: rgba(178, 176, 155, .75);
    white-space: nowrap;
}
.activate-title {
    font-size: 15px;
    line-height: 21px;
}
.activate-text {
    font-size: 11.35px;
    line-height: 16px;
}
.pointer {
    position: absolute;
    left: 735px;
    top: 72px;
    width: 10px;
    height: 16px;
}
```
FILE: script.js
```
const BAR = 185.7
const STEP = BAR / 16
const ROW = 14.4
const B4 = 278.5 // center of the B4 row inside the grid
const END = 742

const pitches = { "G5": 8, "F#5": 7, "E5": 5, "D5": 3, "C#5": 2, "C5": 1, "B4": 0, "G4": -4, "F#4": -5, "E4": -7 }
const melody = ["B4", "F#5", "D5", "G4", "F#5", "D5", "F#4", "F#5", "D5", "C#5", "F#4", "B4", "F#4", "F#5", "D5", "C#5"]
const notes = melody.concat(melody)

const grid = document.querySelector("#grid")
const rowY = (p) => B4 - p * ROW
const rect = (x, y, w, h, fill) => `<rect x="${x}" y="${y}" width="${w}" height="${h}" fill="${fill}"/>`
const isBlack = (p) => [1, 3, 6, 8, 10].includes((((p - 1) % 12) + 12) % 12)

// steps, beats and bars
function gridLines(h) {
    let out = ""
    for (let i = 0; i <= 85; i++) {
        let o = .13
        if (i % 4 === 0) o = .25
        if (i % 16 === 0) o = .4
        if (i === 32 || i === 80) o = .75
        out += `<rect x="${Math.floor(i * STEP)}" y="0" width="1" height="${h}" fill="#0c0b02" opacity="${o}"/>`
    }
    return out
}

// rows
let svg = rect(0, 0, 992, 523, "#493e31")
for (let p = -18; p <= 20; p++) {
    if (isBlack(p)) svg += rect(0, rowY(p) - ROW / 2, 992, ROW, "#42372b")
    svg += rect(0, rowY(p) - ROW / 2, 992, .6, "#3d3327")
}
svg += `<rect x="${END}" y="0" width="260" height="523" fill="#292a15" opacity=".74"/>`

// notes of the other channels
const ghosts = {
    "G5": [[342, 411], [644, 713], [713, 782]],
    "F#5": [[272, 353], [481, 504], [554, 646], [690, 724], [736, 748], [829, 1014]],
    "E5": [[412, 480], [505, 516], [528, 539], [551, 643]],
    "D5": [[272, 434], [434, 446], [447, 458], [528, 550], [552, 1014]],
    "C#5": [[366, 376], [389, 400], [435, 457], [505, 527], [551, 562], [574, 585], [713, 782], [806, 829], [922, 933], [945, 956]],
    "C5": [[551, 562], [736, 748], [926, 933]],
    "B4": [[272, 341], [342, 411], [411, 643], [644, 712], [783, 1014]],
    "G4": [[342, 411], [411, 550], [550, 782]],
    "F#4": [[272, 341], [783, 968], [969, 1014]],
    "E4": [[412, 643]]
}
const hits = [270, 305, 340, 352, 363, 410, 433, 438, 445, 449, 453, 457, 479, 502, 525, 549, 595, 618, 641, 677, 711, 717, 723, 757, 781, 827, 850, 856, 862, 866, 870, 874, 896, 920, 966, 989]
for (const x of hits) ghosts["C5"].push([x, x + 5])
for (const name in ghosts) {
    for (const [a, b] of ghosts[name]) {
        svg += rect(a - 272, rowY(pitches[name]) - 6.5, b - a - .5, 13, name === "C5" ? "#5e5446" : "#62584b")
    }
}
document.querySelector("#grid-svg").innerHTML = svg + gridLines(523)

// own notes + minimap
let mini = ""
const miniY = { "F#5": 1.5, "D5": 4.8, "C#5": 6, "B4": 8.3, "G4": 11.8, "F#4": 13 }
notes.forEach((name, i) => {
    const div = document.createElement("div")
    div.className = i < 16 ? "note" : "note pink"
    div.style.left = i * 2 * STEP + "px"
    div.style.top = rowY(pitches[name]) - 6.5 + "px"
    div.textContent = name
    grid.appendChild(div)
    mini += rect(i * 15 - .5, miniY[name] - .7, 14.5, 1.5, i < 16 ? "#45b184" : "#d39b80")
})
document.querySelector("#mini-notes").innerHTML = mini

// ruler numbers
for (let b = 0; b < 6; b++) {
    const num = document.createElement("span")
    num.textContent = b + 1
    num.style.left = b * BAR + .5 + "px"
    document.querySelector("#ruler").appendChild(num)
}

// keyboard
let keys = `<linearGradient id="black-key"><stop offset="0" stop-color="#202425"/><stop offset="1" stop-color="#44484a"/></linearGradient>`
for (let p = -18; p <= 20; p++) {
    const y = rowY(p)
    const n = ((p % 12) + 12) % 12
    if (n === 0) {
        keys += rect(0, y - 7.2, 57, 21.6, "#b4b6ba")
        keys += `<text x="44" y="${y + 8.2}" font-size="11" fill="#55565a">B${4 + p / 12}</text>`
    }
    if (n === 5) keys += rect(0, y - 7.2, 57, 1, "#b0b3b8")
}
for (let p = -18; p <= 20; p++) {
    if (!isBlack(p)) continue
    keys += rect(0, rowY(p) - 7, 36.5, 14.2, "#15181a") + rect(1, rowY(p) - 6, 34.5, 12, "url(#black-key)")
}
document.querySelector("#keys").innerHTML = keys + rect(0, 0, 1, 523, "#222")

// velocity lane
const lane = (x1, x2, y, c) => rect(x1 - 272, y - 647, x2 - x1, 1, c)
const gray = "#91866f"
function stem(x, y, c, dot) {
    return rect(x - 272 - 1, y - 647, 3, 719 - y, c) + `<circle cx="${x - 271.5}" cy="${y - 647}" r="2.6" fill="${dot}" stroke="${c}"/>`
}
let vel = rect(0, 0, 742, 73, "#493e31") + rect(742, 0, 250, 73, "#33311c") + gridLines(73)
vel += lane(272, 1014, 663, gray) + lane(272, 1014, 666, gray) + lane(272, 1014, 695, gray)
vel += lane(434, 468, 649, gray) + lane(481, 550, 649, gray)
for (const x of [434, 446, 458, 481, 504, 528]) vel += stem(x, 650, gray, gray) + stem(x, 664, gray, gray)
for (const x of [272, 307, 319, 342, 354, 365, 388, 411, 551, 554, 574, 597, 620, 643, 679, 690, 713, 719, 726, 736, 759, 783, 806, 829, 899, 922, 945, 968, 992]) {
    vel += stem(x, 664, gray, gray)
}
for (const [x, y] of [[434, 670], [440, 673], [446, 676], [452, 679], [852, 675], [858, 678], [864, 681], [870, 682]]) vel += stem(x, y, gray, gray)
vel += lane(272, 643, 683, "#55b094") + lane(643, 1014, 683, "#dda39b")
for (let i = 0; i < 32; i++) {
    vel += i < 16 ? stem(272 + i * 2 * STEP, 683.5, "#38a98a", "#177a65") : stem(272 + i * 2 * STEP, 683.5, "#e08e8f", "#8c3a40")
}
for (const x of [272, 342, 411, 643, 713, 783]) vel += `<circle cx="${x - 271.5}" cy="48.500" r="2.8" fill="${gray}"/>`
document.querySelector("#velocity").innerHTML = vel + rect(0, 72, 992, 1, "#241c10")
```
